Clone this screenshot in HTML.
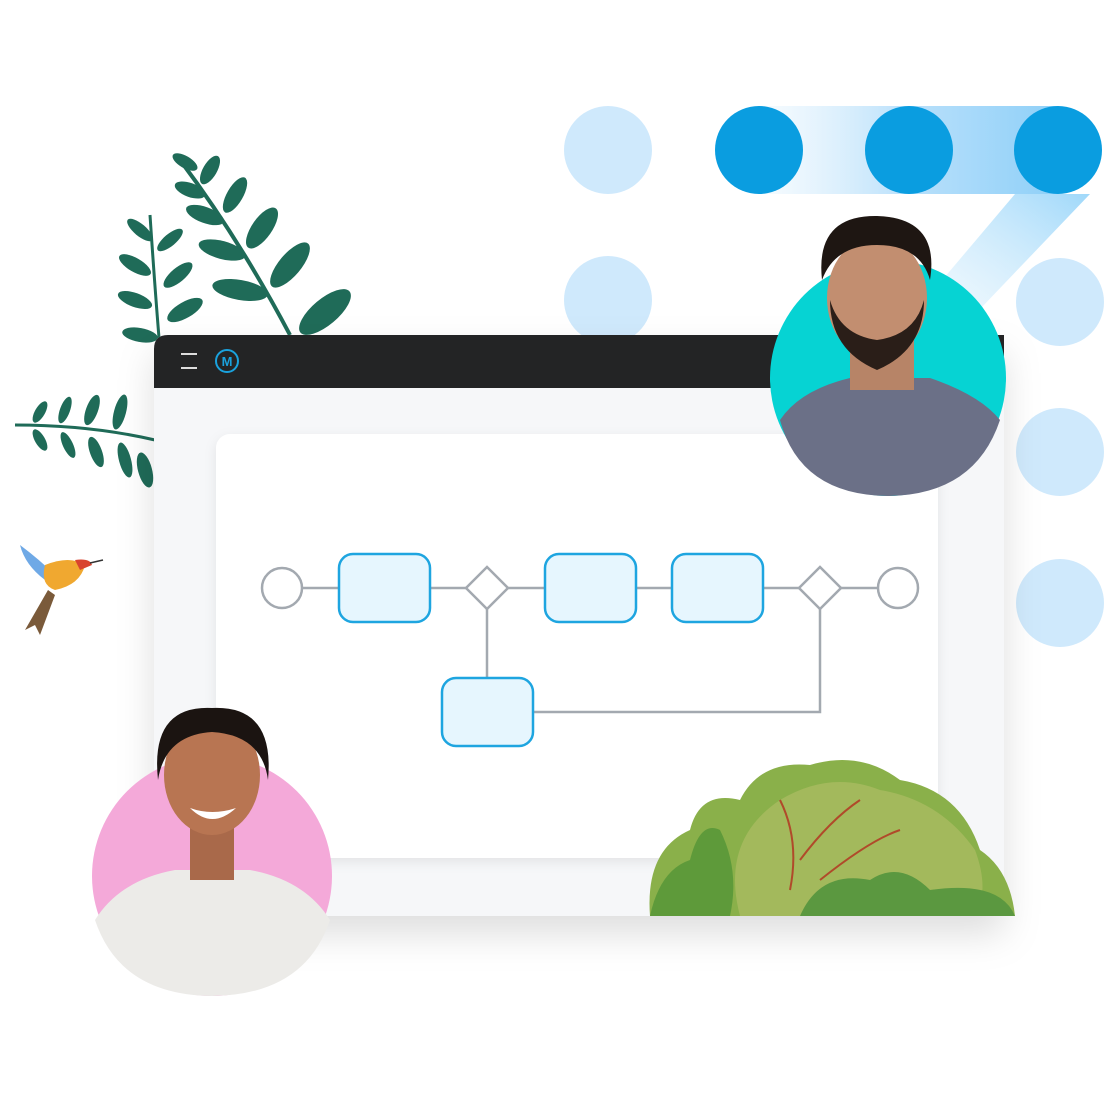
<!DOCTYPE html>
<html><head><style>
html,body{margin:0;padding:0;background:#fff;width:1104px;height:1120px;overflow:hidden;position:relative;font-family:"Liberation Sans",sans-serif}
.a{position:absolute}
</style></head><body>
<svg class="a" style="left:0;top:0" width="1104" height="1120" viewBox="0 0 1104 1120">
<defs>
<linearGradient id="band" x1="0" x2="1" y1="0" y2="0">
<stop offset="0" stop-color="#d8eefc" stop-opacity="0.2"/><stop offset="0.5" stop-color="#b9e0fb"/><stop offset="1" stop-color="#8fd0f8"/></linearGradient>
<linearGradient id="diag" x1="1" y1="0" x2="0" y2="1">
<stop offset="0" stop-color="#9fd8fa"/><stop offset="1" stop-color="#e6f4fd" stop-opacity="0.3"/></linearGradient>
<filter id="sh" x="-20%" y="-20%" width="140%" height="150%"><feDropShadow dx="0" dy="18" stdDeviation="18" flood-color="#000" flood-opacity="0.13"/></filter>
<filter id="sh2"><feDropShadow dx="0" dy="4" stdDeviation="6" flood-color="#000" flood-opacity="0.08"/></filter>
</defs>
<!-- dots -->
<rect x="758" y="106" width="300" height="88" fill="url(#band)"/>
<polygon points="1015,194 1090,194 960,330 900,330" fill="url(#diag)"/>
<g fill="#cfe9fc">
<circle cx="608" cy="150" r="44"/><circle cx="608" cy="300" r="44"/>
<circle cx="1060" cy="302" r="44"/><circle cx="1060" cy="452" r="44"/><circle cx="1060" cy="603" r="44"/>
</g>
<g fill="#0a9de0"><circle cx="759" cy="150" r="44"/><circle cx="909" cy="150" r="44"/><circle cx="1058" cy="150" r="44"/></g>
<!-- leaves -->
<g fill="#1f6b58" stroke="#1f6b58">
<path d="M180 160 Q240 240 290 335" fill="none" stroke-width="4"/>
<path d="M150 215 Q155 290 160 350" fill="none" stroke-width="3"/>
<path d="M15 425 Q90 425 155 440" fill="none" stroke-width="3"/>
</g>
<g fill="#1f6b58">
<ellipse cx="185" cy="162" rx="14" ry="6" transform="rotate(30 185 162)"/>
<ellipse cx="210" cy="170" rx="16" ry="7" transform="rotate(-60 210 170)"/>
<ellipse cx="190" cy="190" rx="16" ry="7" transform="rotate(20 190 190)"/>
<ellipse cx="235" cy="195" rx="20" ry="8" transform="rotate(-60 235 195)"/>
<ellipse cx="205" cy="215" rx="20" ry="8" transform="rotate(20 205 215)"/>
<ellipse cx="262" cy="228" rx="24" ry="10" transform="rotate(-55 262 228)"/>
<ellipse cx="222" cy="250" rx="24" ry="9" transform="rotate(15 222 250)"/>
<ellipse cx="290" cy="265" rx="28" ry="11" transform="rotate(-50 290 265)"/>
<ellipse cx="240" cy="290" rx="28" ry="10" transform="rotate(10 240 290)"/>
<ellipse cx="325" cy="312" rx="32" ry="13" transform="rotate(-40 325 312)"/>
<ellipse cx="140" cy="230" rx="16" ry="6" transform="rotate(40 140 230)"/>
<ellipse cx="170" cy="240" rx="16" ry="6" transform="rotate(-40 170 240)"/>
<ellipse cx="135" cy="265" rx="18" ry="7" transform="rotate(30 135 265)"/>
<ellipse cx="178" cy="275" rx="18" ry="7" transform="rotate(-40 178 275)"/>
<ellipse cx="135" cy="300" rx="18" ry="7" transform="rotate(20 135 300)"/>
<ellipse cx="185" cy="310" rx="20" ry="8" transform="rotate(-30 185 310)"/>
<ellipse cx="140" cy="335" rx="18" ry="7" transform="rotate(10 140 335)"/>
<ellipse cx="40" cy="412" rx="12" ry="5" transform="rotate(-60 40 412)"/>
<ellipse cx="65" cy="410" rx="14" ry="5" transform="rotate(-70 65 410)"/>
<ellipse cx="92" cy="410" rx="16" ry="6" transform="rotate(-70 92 410)"/>
<ellipse cx="120" cy="412" rx="18" ry="6" transform="rotate(-75 120 412)"/>
<ellipse cx="40" cy="440" rx="12" ry="5" transform="rotate(60 40 440)"/>
<ellipse cx="68" cy="445" rx="14" ry="5" transform="rotate(65 68 445)"/>
<ellipse cx="96" cy="452" rx="16" ry="6" transform="rotate(70 96 452)"/>
<ellipse cx="125" cy="460" rx="18" ry="6" transform="rotate(75 125 460)"/>
<ellipse cx="145" cy="470" rx="18" ry="7" transform="rotate(75 145 470)"/>
</g>
<!-- hummingbird -->
<g>
<path d="M20 545 Q40 560 55 575 L45 580 Q25 565 20 545Z" fill="#6fa9e6"/>
<path d="M45 565 Q70 555 85 565 Q80 585 55 590 Q40 585 45 565Z" fill="#f0a830"/>
<path d="M75 560 Q90 558 92 565 L80 570Z" fill="#d9432f"/>
<line x1="90" y1="563" x2="103" y2="560" stroke="#333" stroke-width="1.5"/>
<path d="M48 590 L25 630 L35 625 L40 635 L55 595Z" fill="#7a5a3a"/>
</g>
<!-- window -->
<g filter="url(#sh)">
<path d="M168 335 H1004 V916 H154 V349 Q154 335 168 335Z" fill="#f6f7f9"/>
</g>
<path d="M168 335 H1004 V388 H154 V349 Q154 335 168 335Z" fill="#232425"/>
<line x1="181" y1="354" x2="197" y2="354" stroke="#ddd" stroke-width="2"/>
<line x1="181" y1="368" x2="197" y2="368" stroke="#ddd" stroke-width="2"/>
<circle cx="227" cy="361" r="11" fill="none" stroke="#1aa2dd" stroke-width="2"/>
<text x="227" y="366" text-anchor="middle" font-size="13" font-weight="bold" fill="#1aa2dd" font-family="Liberation Sans">M</text>
<rect x="216" y="434" width="722" height="424" rx="14" fill="#fff" filter="url(#sh2)"/>
<!-- diagram -->
<g stroke="#a3a9b0" stroke-width="2.5" fill="none">
<line x1="302" y1="588" x2="338" y2="588"/><line x1="430" y1="588" x2="466" y2="588"/>
<line x1="508" y1="588" x2="544" y2="588"/><line x1="636" y1="588" x2="671" y2="588"/>
<line x1="763" y1="588" x2="799" y2="588"/><line x1="841" y1="588" x2="878" y2="588"/>
<line x1="487" y1="609" x2="487" y2="677"/>
<polyline points="533,712 820,712 820,609"/>
<circle cx="282" cy="588" r="20" fill="#fff"/><circle cx="898" cy="588" r="20" fill="#fff"/>
<polygon points="487,567 508,588 487,609 466,588" fill="#fff"/>
<polygon points="820,567 841,588 820,609 799,588" fill="#fff"/>
</g>
<g stroke="#1ea5e0" stroke-width="2.5" fill="#e6f6fe">
<rect x="339" y="554" width="91" height="68" rx="14"/>
<rect x="545" y="554" width="91" height="68" rx="14"/>
<rect x="672" y="554" width="91" height="68" rx="14"/>
<rect x="442" y="678" width="91" height="68" rx="14"/>
</g>
<!-- bush -->
<g>
<path d="M650 916 Q645 850 690 830 Q700 790 740 800 Q760 760 810 765 Q860 750 900 780 Q960 790 980 850 Q1010 870 1015 916Z" fill="#8ab04a"/>
<path d="M740 916 Q720 840 780 800 Q830 770 880 790 Q940 800 975 850 Q990 890 975 916Z" fill="#a3b95c"/>
<path d="M650 916 Q660 870 690 860 Q700 820 720 830 Q740 870 730 916Z" fill="#5e9a3a"/>
<path d="M800 916 Q820 870 870 880 Q900 860 930 890 Q1000 880 1015 916Z" fill="#5b9840"/>
<g stroke="#b04a2a" stroke-width="2" fill="none">
<path d="M790 890 Q800 840 780 800"/><path d="M800 860 Q830 820 860 800"/><path d="M820 880 Q870 840 900 830"/>
</g>
</g>
<!-- man -->
<circle cx="888" cy="378" r="118" fill="#06d3d3"/>
<path d="M780 420 Q800 390 850 378 L930 378 Q980 395 1000 420 Q975 495 888 496 Q800 495 780 420Z" fill="#6b7087"/>
<rect x="850" y="320" width="64" height="70" fill="#b78467"/>
<ellipse cx="877" cy="298" rx="50" ry="62" fill="#c28e70"/>
<path d="M830 300 Q830 350 877 370 Q924 350 924 300 Q915 335 877 340 Q840 335 830 300Z" fill="#2a1e18"/>
<path d="M822 280 Q815 215 877 216 Q940 218 930 280 Q920 245 877 245 Q835 245 822 280Z" fill="#1e1612"/>
<!-- woman -->
<circle cx="212" cy="876" r="120" fill="#f4a9d9"/>
<path d="M95 920 Q120 880 175 870 L250 870 Q305 880 330 920 Q305 995 212 996 Q120 995 95 920Z" fill="#ecebe8"/>
<rect x="190" y="820" width="44" height="60" fill="#a9694a"/>
<ellipse cx="212" cy="775" rx="48" ry="60" fill="#b87552"/>
<path d="M158 780 Q150 705 212 708 Q275 705 268 780 Q262 735 212 732 Q165 735 158 780Z" fill="#1b1411"/>
<path d="M190 808 Q212 830 236 808 Q212 816 190 808Z" fill="#fff"/>
</svg>
</body></html>
